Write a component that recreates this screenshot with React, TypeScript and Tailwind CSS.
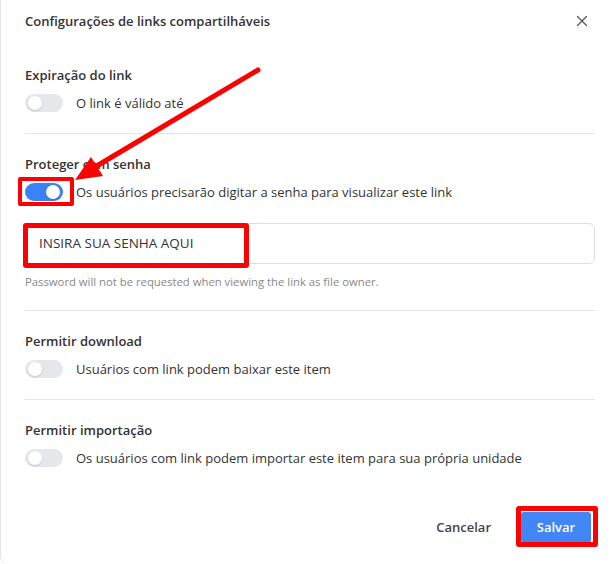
import { X } from "lucide-react";

const Toggle: React.FC<{ on?: boolean }> = ({ on = false }) => (
  <div
    className={`flex h-[18px] w-[38px] shrink-0 items-center rounded-full px-[3px] ${
      on ? "justify-end bg-[#3b82f6]" : "justify-start bg-[#e5e7eb]"
    }`}
  >
    <div className="h-[14px] w-[14px] rounded-full bg-white shadow-[0_1px_2px_rgba(0,0,0,0.15)]" />
  </div>
);

const Section: React.FC<{
  title: string;
  label: string;
  on?: boolean;
  divider?: boolean;
  children?: React.ReactNode;
}> = ({ title, label, on, divider = true, children }) => (
  <div className={`py-5 ${divider ? "border-b border-[#e5e5e5]" : ""}`}>
    <div className="text-[13px] font-semibold leading-5 text-[#333]">{title}</div>
    <div className="mt-2 flex h-5 items-center gap-[13px]">
      <Toggle on={on} />
      <span className="text-[13px] leading-5 text-[#333]">{label}</span>
    </div>
    {children}
  </div>
);

export default function App() {
  return (
    <div
      className="relative h-[564px] w-[615px] overflow-hidden rounded-bl-lg border-l border-[#e5e5e5] bg-white"
      style={{ fontFamily: '"Open Sans", "Noto Sans", sans-serif' }}
    >
      <div className="flex items-center justify-between py-[11px] pl-6 pr-[24px]">
        <h2 className="text-[13px] font-semibold leading-5 text-[#333]">
          Configurações de links compartilháveis
        </h2>
        <X className="h-[18px] w-[18px] text-[#555]" strokeWidth={1.6} />
      </div>

      <div className="pl-6 pr-5 pt-[3px]">
        <Section title="Expiração do link" label="O link é válido até" />
        <Section
          title="Proteger com senha"
          label="Os usuários precisarão digitar a senha para visualizar este link"
          on
        >
          <div className="mt-[21px] flex h-[41px] items-center rounded-md border border-[#dedede] px-[13px] text-[13.5px] text-[#333]">
            INSIRA SUA SENHA AQUI
          </div>
          <div className="mt-[10px] text-[11.3px] leading-4 text-[#888]">
            Password will not be requested when viewing the link as file owner.
          </div>
        </Section>
        <Section
          title="Permitir download"
          label="Usuários com link podem baixar este item"
        />
        <Section
          title="Permitir importação"
          label="Os usuários com link podem importar este item para sua própria unidade"
          divider={false}
        />

        <div className="mt-[24px] flex items-center justify-end gap-[30px] pr-[4px]">
          <button className="text-[13px] font-semibold text-[#444]">Cancelar</button>
          <button className="h-[31px] w-[70px] rounded-[3px] bg-[#4285f4] text-[13px] font-semibold text-white">
            Salvar
          </button>
        </div>
      </div>

      {/* annotations */}
      <div className="pointer-events-none absolute left-[17px] top-[177px] h-[29px] w-[56px] rounded-[2px] border-4 border-[#ff0000]" />
      <div className="pointer-events-none absolute left-[22px] top-[223px] h-[45px] w-[226px] rounded-[3px] border-[5px] border-[#ff0000]" />
      <div className="pointer-events-none absolute left-[515px] top-[506px] h-[41px] w-[82px] rounded-[3px] border-[5px] border-[#ff0000]" />
      <svg
        className="pointer-events-none absolute left-0 top-0"
        width="615"
        height="564"
        viewBox="0 0 615 564"
      >
        <line
          x1="257"
          y1="70"
          x2="94"
          y2="167"
          stroke="#ff0000"
          strokeWidth="5"
          strokeLinecap="round"
        />
        <polygon points="74,180 90,157 102,176" fill="#ff0000" />
      </svg>
    </div>
  );
}
